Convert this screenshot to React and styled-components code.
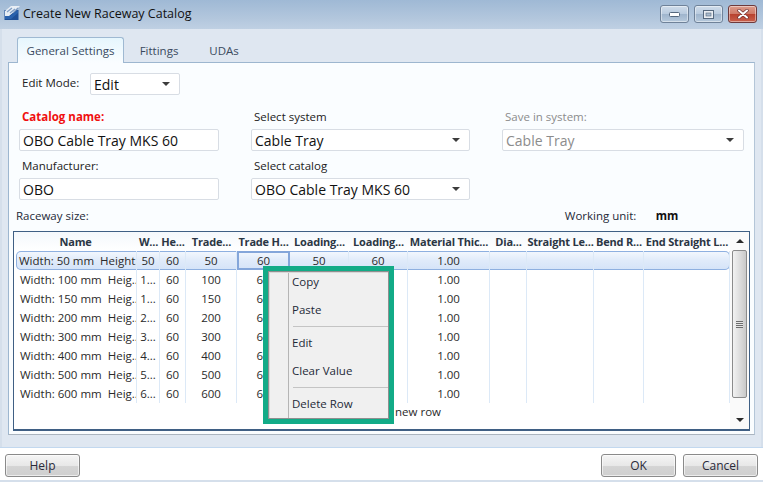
import React from 'react';
import styled, { createGlobalStyle } from 'styled-components';

const GlobalStyle = createGlobalStyle`
  html, body {
    margin: 0;
    padding: 0;
    background: #fff;
  }
  * {
    box-sizing: border-box;
  }
`;

const Page = styled.div`
  width: 763px;
  height: 482px;
  display: flex;
  flex-direction: column;
  overflow: hidden;
  font-family: "Open Sans", "Noto Sans", sans-serif;
  font-size: 11.5px;
  color: #1e2a38;
  background: #d5dfeb;
`;

const TitleBar = styled.div`
  height: 29px;
  flex: none;
  display: flex;
  align-items: flex-start;
  padding: 5px 6px 0 4px;
  background: linear-gradient(to bottom, #9fb9d5 0%, #b3c7dd 65%, #bfd0e3 100%);
`;

const TitleText = styled.div`
  margin-left: 2px;
  line-height: 18px;
  font-size: 12.5px;
  color: #111;
  flex: 1;
`;

const WinControls = styled.div`
  display: flex;
  gap: 5px;
`;

const WinButton = styled.div`
  width: ${(p) => (p.$close ? 29 : 29)}px;
  height: 18px;
  display: flex;
  align-items: center;
  justify-content: center;
  border-radius: 3px;
  border: 1px solid ${(p) => (p.$close ? '#6e3a3c' : '#6f8299')};
  box-shadow: inset 0 0 0 1px rgba(255, 255, 255, 0.45);
  background: ${(p) =>
    p.$close
      ? 'linear-gradient(to bottom, #dc9c8c 0%, #cf7a68 48%, #b8422f 52%, #c9604c 100%)'
      : 'linear-gradient(to bottom, #cfdcea 0%, #b9cbdf 48%, #9fb5cd 52%, #b6c9dc 100%)'};
`;

const Body = styled.div`
  flex: none;
  height: 418px;
  margin: 0 2px;
  padding: 8px 6px 12px 6px;
  background: #dfe7f1;
  display: flex;
  flex-direction: column;
`;

const TabStrip = styled.div`
  display: flex;
  height: 26px;
  padding-left: 9px;
  margin-bottom: -1px;
  position: relative;
  z-index: 1;
`;

const Tab = styled.div`
  display: flex;
  align-items: center;
  justify-content: center;
  width: ${(p) => p.$width}px;
  color: #3a4a5e;
  border-radius: 3px 3px 0 0;
  border: 1px solid ${(p) => (p.$active ? '#9fb9d2' : 'transparent')};
  border-bottom: none;
  background: ${(p) =>
    p.$active ? 'linear-gradient(to bottom, #e6f6fd 0%, #fafdff 100%)' : 'transparent'};
`;

const Panel = styled.div`
  flex: 1;
  display: flex;
  flex-direction: column;
  padding: 0 4px 3px;
  background: #fafdff;
  border: 1px solid #9db6cf;
  border-right-color: #b4c6d8;
  border-bottom-color: #aab4bf;
`;

const ModeRow = styled.div`
  display: flex;
  align-items: center;
  height: 22px;
  margin-top: 10px;
  padding-left: 9px;
`;

const ModeLabel = styled.div`
  width: 68px;
  margin-top: -3px;
  color: #222;
`;

const Field = styled.div`
  width: ${(p) => p.$width}px;
  height: 22px;
  display: flex;
  align-items: center;
  justify-content: space-between;
  padding: 0 9px 0 3px;
  background: #fff;
  border: 1px solid #d8dde4;
  border-radius: 2px;
  font-size: 14px;
  color: ${(p) => (p.$disabled ? '#8c8c8c' : '#111')};
  white-space: nowrap;
`;

const Caret = styled.span`
  width: 0;
  height: 0;
  border-left: 4px solid transparent;
  border-right: 4px solid transparent;
  border-top: 4px solid #3c3c3c;
`;

const FormGrid = styled.div`
  display: grid;
  grid-template-columns: 200px 219px 242px;
  column-gap: 32px;
  row-gap: 7px;
  margin-top: 14px;
  padding-left: 6px;
`;

const FieldGroup = styled.div`
  display: flex;
  flex-direction: column;
`;

const Label = styled.div`
  height: 20px;
  line-height: 16px;
  padding-left: ${(p) => p.$indent || 3}px;
  color: ${(p) => (p.$disabled ? '#8c8c8c' : p.$required ? '#f01010' : '#222')};
  font-weight: ${(p) => (p.$required ? 700 : 400)};
`;

const SizeRow = styled.div`
  display: flex;
  align-items: center;
  height: 20px;
  margin-top: 5px;
  padding-left: 3px;
`;

const UnitLabel = styled.div`
  margin-left: 476px;
  width: 91px;
`;

const UnitValue = styled.div`
  font-weight: 700;
  color: #111;
`;

const Sheet = styled.div`
  position: relative;
  flex: none;
  height: 200px;
  margin-top: 6px;
  display: flex;
  background: #fff;
  border: 1px solid #3f5f84;
  border-bottom-width: 2px;
`;

const Table = styled.div`
  flex: 1;
  display: flex;
  flex-direction: column;
  min-width: 0;
`;

const columns = '123px 23px 26px 51px 53px 59px 59px 82px 37px 67px 50px 86px';

const HeaderRow = styled.div`
  display: grid;
  grid-template-columns: ${columns};
  height: 19px;
  align-items: center;
  font-weight: 700;
  color: #2b3644;
  background: linear-gradient(to bottom, #f4f8fc, #ffffff);
`;

const HeaderCell = styled.div`
  text-align: center;
  white-space: nowrap;
  overflow: hidden;
  font-size: 11px;
  letter-spacing: -0.2px;
`;

const Row = styled.div`
  display: grid;
  grid-template-columns: ${columns};
  height: 19px;
  position: relative;
  border-radius: ${(p) => (p.$selected ? '5px' : '0')};
  background: ${(p) =>
    p.$selected ? 'linear-gradient(to bottom, #f4f8fe 0%, #e0ebfa 50%, #d4e3f8 100%)' : 'transparent'};
  box-shadow: ${(p) => (p.$selected ? 'inset 0 0 0 1px #8eb0e0' : 'none')};
  margin-left: ${(p) => (p.$selected ? '2px' : '0')};
  grid-template-columns: ${(p) => (p.$selected ? '121px' : '123px')} 23px 26px 51px 53px 59px 59px 82px 37px 67px 50px 86px;
`;

const Cell = styled.div`
  display: flex;
  align-items: center;
  justify-content: ${(p) => (p.$left ? 'flex-start' : 'center')};
  padding-left: ${(p) => (p.$left ? (p.$selected ? '3px' : '6px') : '0')};
  white-space: pre;
  overflow: hidden;
  color: #2a2a2a;
  border-right: 1px solid #dce9f7;
  border: ${(p) => (p.$focus ? '2px solid #84a6da' : undefined)};
`;

const AddRow = styled.div`
  height: 19px;
  line-height: 17px;
  text-align: right;
  padding-right: 289px;
  color: #2a2a2a;
`;

const Scrollbar = styled.div`
  width: 19px;
  flex: none;
  display: flex;
  flex-direction: column;
  align-items: center;
  padding: 0 2px 0 2px;
  background: #fafafa;
`;

const ScrollArrow = styled.div`
  height: 18px;
  flex: none;
  display: flex;
  align-items: center;
  justify-content: center;
`;

const ArrowUp = styled.span`
  width: 0;
  height: 0;
  border-left: 4px solid transparent;
  border-right: 4px solid transparent;
  border-bottom: 4px solid #2a2a2a;
`;

const ArrowDown = styled(ArrowUp)`
  border-bottom: none;
  border-top: 4px solid #2a2a2a;
`;

const Thumb = styled.div`
  width: 15px;
  height: 148px;
  display: flex;
  align-items: center;
  justify-content: center;
  border: 1px solid #8b8b8b;
  border-radius: 2px;
  background: linear-gradient(to right, #f2f2f2, #dcdcdc 55%, #c9c9c9);
`;

const Grip = styled.div`
  width: 7px;
  height: 7px;
  background: repeating-linear-gradient(to bottom, #6d6d6d 0 1px, #e6e6e6 1px 2px);
`;

const Menu = styled.div`
  position: absolute;
  left: 249px;
  top: 34px;
  width: 131px;
  height: 158px;
  border: 5px solid #12ab87;
  z-index: 2;
`;

const MenuInner = styled.div`
  height: 100%;
  display: flex;
  flex-direction: column;
  gap: 6px;
  padding-left: 24px;
  background: linear-gradient(to right, #f0f0f0 20px, #b5b5b5 20px, #b5b5b5 21px, #f0f0f0 21px);
  box-shadow: inset 0 0 0 1px #8f8f8f, inset 2px 2px 0 #d8d8d8;
`;

const MenuItem = styled.div`
  height: 22px;
  line-height: 22px;
  font-size: 11.5px;
  color: #1e2a38;
`;

const MenuSeparator = styled.div`
  height: 1px;
  margin: -1px 1px -1px 1px;
  background: #c4c4c4;
`;

const Footer = styled.div`
  flex: 1;
  display: flex;
  justify-content: space-between;
  align-items: flex-start;
  padding: 6px 5px 0;
  margin-bottom: 2px;
  background: #fff;
  border-top: 1px solid #c2d8ef;
`;

const ButtonGroup = styled.div`
  display: flex;
  gap: 7px;
`;

const Button = styled.div`
  width: 75px;
  height: 23px;
  display: flex;
  align-items: center;
  justify-content: center;
  font-size: 12px;
  color: #2a2a3a;
  border: 1px solid #8a8a8a;
  border-radius: 3px;
  background: linear-gradient(to bottom, #f5f5f5 0%, #e8e8e8 50%, #d4d4d4 55%, #cfcfcf 100%);
  box-shadow: inset 0 0 0 1px rgba(255, 255, 255, 0.6);
`;

const sizes = [50, 100, 150, 200, 300, 400, 500, 600];

const headers = [
  'Name',
  'W...',
  'He...',
  'Trade...',
  'Trade H...',
  'Loading...',
  'Loading...',
  'Material Thic...',
  'Dia...',
  'Straight Le...',
  'Bend R...',
  'End Straight L...',
];

const CatalogIcon = () => (
  <svg width="17" height="16" viewBox="0 0 17 16">
    <rect x="0.5" y="5" width="14" height="10" fill="#1f4f96" />
    <path d="M1 6 L7 1 H16 L10 7 L5 11 H1 Z" fill="#e8eef5" />
    <path d="M3 7 L8 3 M6 8 L11 4 M9 8 L14 3" stroke="#7f9dc4" strokeWidth="1.2" fill="none" />
    <path d="M1 11 H6 L14 5 V8 L7 14 H1 Z" fill="#2a62ad" />
  </svg>
);

const App = () => {
  return (
    <>
      <GlobalStyle />
      <Page>
        <TitleBar>
          <CatalogIcon />
          <TitleText>Create New Raceway Catalog</TitleText>
          <WinControls>
            <WinButton>
              <svg width="11" height="5" viewBox="0 0 11 5">
                <rect x="0.5" y="0.5" width="10" height="4" rx="1" fill="#fff" stroke="#55687e" />
              </svg>
            </WinButton>
            <WinButton>
              <svg width="11" height="9" viewBox="0 0 11 9">
                <rect x="0.5" y="0.5" width="10" height="8" fill="#e9edf2" stroke="#55687e" />
                <rect x="3" y="3" width="5" height="3" fill="#a9bbcf" stroke="#55687e" strokeWidth="0.6" />
              </svg>
            </WinButton>
            <WinButton $close>
              <svg width="12" height="10" viewBox="0 0 12 10">
                <path
                  d="M2 1.5 L10 8.5 M10 1.5 L2 8.5"
                  stroke="#6e3030"
                  strokeWidth="3.4"
                  strokeLinecap="round"
                />
                <path d="M2 1.5 L10 8.5 M10 1.5 L2 8.5" stroke="#fff" strokeWidth="2" strokeLinecap="round" />
              </svg>
            </WinButton>
          </WinControls>
        </TitleBar>
        <Body>
          <TabStrip>
            <Tab $active $width={107}>General Settings</Tab>
            <Tab $width={70}>Fittings</Tab>
            <Tab $width={60}>UDAs</Tab>
          </TabStrip>
          <Panel>
            <ModeRow>
              <ModeLabel>Edit Mode:</ModeLabel>
              <Field $width={90}>
                Edit
                <Caret />
              </Field>
            </ModeRow>
            <FormGrid>
              <FieldGroup>
                <Label $required>Catalog name:</Label>
                <Field $width={200}>OBO Cable Tray MKS 60</Field>
              </FieldGroup>
              <FieldGroup>
                <Label>Select system</Label>
                <Field $width={219}>
                  Cable Tray
                  <Caret />
                </Field>
              </FieldGroup>
              <FieldGroup>
                <Label $disabled>Save in system:</Label>
                <Field $width={242} $disabled>
                  Cable Tray
                  <Caret />
                </Field>
              </FieldGroup>
              <FieldGroup>
                <Label>Manufacturer:</Label>
                <Field $width={200}>OBO</Field>
              </FieldGroup>
              <FieldGroup>
                <Label>Select catalog</Label>
                <Field $width={219}>
                  OBO Cable Tray MKS 60
                  <Caret />
                </Field>
              </FieldGroup>
            </FormGrid>
            <SizeRow>
              Raceway size:
              <UnitLabel>Working unit:</UnitLabel>
              <UnitValue>mm</UnitValue>
            </SizeRow>
            <Sheet>
              <Table>
                <HeaderRow>
                  {headers.map((h, i) => (
                    <HeaderCell key={i}>{h}</HeaderCell>
                  ))}
                </HeaderRow>
                {sizes.map((size, i) => {
                  const selected = i === 0;
                  return (
                    <Row key={size} $selected={selected}>
                      <Cell $left $selected={selected}>
                        {`Width: ${size} mm  ${selected ? 'Height...' : 'Heig...'}`}
                      </Cell>
                      <Cell>{selected ? '50' : `${String(size)[0]}...`}</Cell>
                      <Cell>60</Cell>
                      <Cell>{size}</Cell>
                      <Cell $focus={selected}>60</Cell>
                      <Cell>{selected ? '50' : ''}</Cell>
                      <Cell>{selected ? '60' : ''}</Cell>
                      <Cell>1.00</Cell>
                      <Cell />
                      <Cell />
                      <Cell />
                      <Cell />
                    </Row>
                  );
                })}
                <AddRow>Click here to add a new row</AddRow>
              </Table>
              <Scrollbar>
                <ScrollArrow>
                  <ArrowUp />
                </ScrollArrow>
                <Thumb>
                  <Grip />
                </Thumb>
                <div style={{ flex: 1 }} />
                <ScrollArrow>
                  <ArrowDown />
                </ScrollArrow>
              </Scrollbar>
              <Menu>
                <MenuInner>
                  <MenuItem>Copy</MenuItem>
                  <MenuItem>Paste</MenuItem>
                  <MenuSeparator />
                  <MenuItem>Edit</MenuItem>
                  <MenuItem>Clear Value</MenuItem>
                  <MenuSeparator />
                  <MenuItem>Delete Row</MenuItem>
                </MenuInner>
              </Menu>
            </Sheet>
          </Panel>
        </Body>
        <Footer>
          <Button>Help</Button>
          <ButtonGroup>
            <Button>OK</Button>
            <Button>Cancel</Button>
          </ButtonGroup>
        </Footer>
      </Page>
    </>
  );
};

export default App;
